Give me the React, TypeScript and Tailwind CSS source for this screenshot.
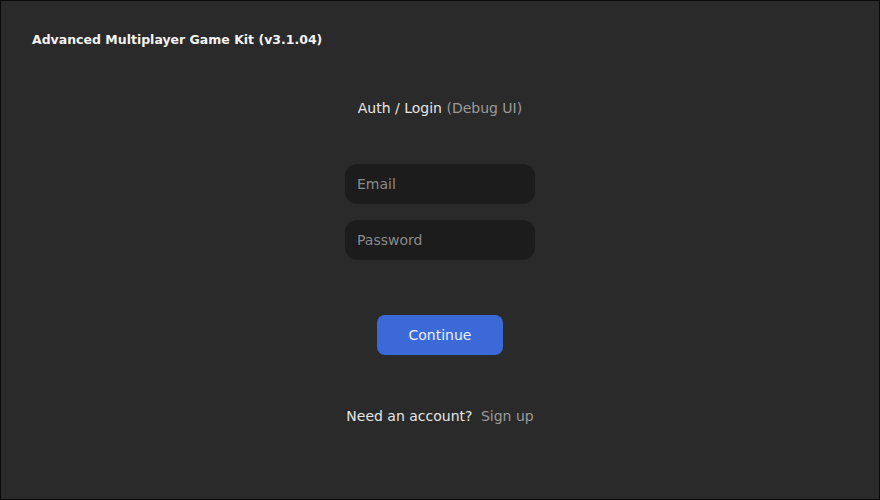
export default function App() {
  return (
    <div
      className="w-[880px] h-[500px] bg-[#2a2a2a] border border-[#0a0a0a] text-white flex flex-col"
      style={{ fontFamily: '"DejaVu Sans", "Noto Sans", sans-serif' }}
    >
      <div className="pl-[31px] pt-[29px] text-[12.5px] font-bold text-[#f2f2f2] leading-[20px]">
        Advanced Multiplayer Game Kit (v3.1.04)
      </div>

      <div className="flex flex-col items-center">
        <p className="mt-[48px] text-[14px] leading-[20px] text-[#e6e6e6]">
          Auth / Login <span className="text-[#9a9a9a]">(Debug UI)</span>
        </p>

        <div className="mt-[46px] flex flex-col gap-4">
          <input
            placeholder="Email"
            className="w-[190px] h-10 rounded-xl bg-[#1c1c1c] px-3 text-[14px] text-white placeholder:text-[#8a8a8a] outline-none"
          />
          <input
            type="password"
            placeholder="Password"
            className="w-[190px] h-10 rounded-xl bg-[#1c1c1c] px-3 text-[14px] text-white placeholder:text-[#8a8a8a] outline-none"
          />
        </div>

        <button className="mt-[55px] w-[126px] h-10 rounded-lg bg-[#3b6ad8] text-[14px] text-[#e8eefc]">
          Continue
        </button>

        <p className="mt-[51px] text-[14px] leading-[20px] text-[#e6e6e6]">
          Need an account? <span className="ml-1 text-[#9a9a9a]">Sign up</span>
        </p>
      </div>
    </div>
  );
}
